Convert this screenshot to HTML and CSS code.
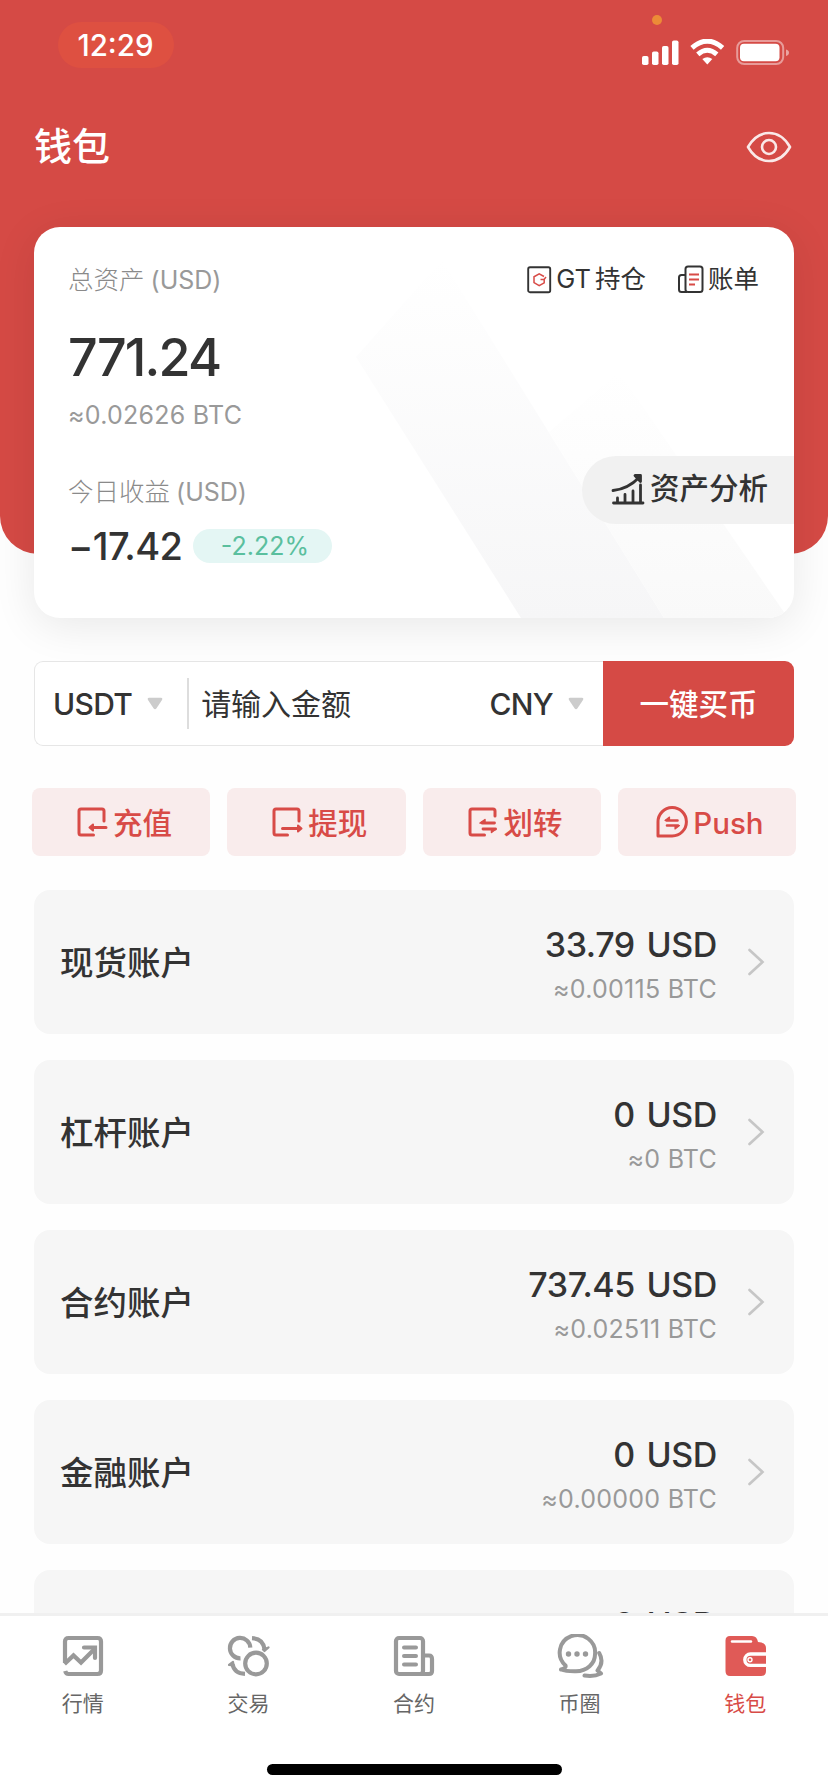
FILE: index.html
```html
<!DOCTYPE html>
<html lang="zh-CN">
<head>
<meta charset="utf-8">
<title>钱包</title>
<link rel="stylesheet" href="styles.css">
</head>
<body>
<div class="screen">
  <header class="header">
    <div class="status">
      <span class="time">12:29</span>
      <span class="mic-dot"></span>
      <svg class="status-icons" width="148" height="28" viewBox="0 0 148 28" fill="#fff">
        <rect x="0" y="17" width="6.500" height="9" rx="1.800"/>
        <rect x="10" y="12.500" width="6.500" height="13.500" rx="1.800"/>
        <rect x="20" y="7" width="6.500" height="19" rx="1.800"/>
        <rect x="30" y="1.500" width="6.500" height="24.500" rx="1.800"/>
        <g fill="none" stroke="#fff" stroke-width="5">
          <path d="M50 8.800Q65.300 -4.500 80.600 8.800"/>
          <path d="M55.800 15.300Q65.300 7.200 74.800 15.300"/>
        </g>
        <path d="M60.300 20Q65.300 16.300 70.300 20L65.300 25.500Z"/>
        <rect x="95.200" y="2" width="46" height="23" rx="7" fill="none" stroke="#fff" stroke-opacity=".45" stroke-width="2"/>
        <rect x="98" y="4.800" width="39.500" height="17.400" rx="4"/>
        <path d="M144 10.500q3 .8 3 3.200t-3 3.200z" fill-opacity=".5"/>
      </svg>
    </div>
    <div class="titlebar">
      <h1 class="title">钱包</h1>
      <svg width="46" height="32" viewBox="0 0 46 32" fill="none" stroke="#fff" stroke-opacity=".88" stroke-width="2.600" stroke-linejoin="round">
        <path d="M2 16Q10 2 23 2T44 16Q36 30 23 30T2 16Z"/>
        <circle cx="23" cy="16" r="7"/>
      </svg>
    </div>
  </header>

  <section class="card">
    <svg class="card-art" width="760" height="391" viewBox="0 0 760 391">
      <defs>
        <linearGradient id="band" x1="0" y1="0" x2="0" y2="1">
          <stop offset="0" stop-color="#f6f6f7" stop-opacity="0"/>
          <stop offset="1" stop-color="#f6f6f7"/>
        </linearGradient>
        <linearGradient id="band-light" x1="0" y1="0" x2="0" y2="1">
          <stop offset="0" stop-color="#f9f9f9" stop-opacity="0"/>
          <stop offset="1" stop-color="#f9f9f9"/>
        </linearGradient>
      </defs>
      <path d="M322 130L408 33L630 391H487Z" fill="url(#band)"/>
      <path d="M515 205L585 145L754 391H630Z" fill="url(#band-light)"/>
    </svg>
    <div class="card-left">
      <div class="label">总资产<span class="unit">(USD)</span></div>
      <div class="total">771.24</div>
      <div class="btc">≈0.02626 BTC</div>
      <div class="label label-today">今日收益<span class="unit">(USD)</span></div>
      <div class="profit"><span class="profit-value">−17.42</span><span class="rate">-2.22%</span></div>
    </div>
    <div class="card-right">
      <div class="links">
        <a class="link">
          <svg width="26" height="30" viewBox="0 0 26 30" fill="none" stroke="#333" stroke-width="1.900">
            <rect x="1.200" y="2.200" width="22" height="25" rx="1.800"/>
            <path d="M17 11.500L12.200 8.800L7 11.800V17.600L12.200 20.600L17.200 17.800V14.500H13.500M17 14.500L19 12" stroke="#d84b47" stroke-width="1.500"/>
          </svg>
          <span>GT<span class="hair"></span>持仓</span>
        </a>
        <a class="link">
          <svg width="28" height="30" viewBox="0 0 28 30" fill="none" stroke="#333" stroke-width="2" stroke-linejoin="round">
            <rect x="8.500" y="1.500" width="17" height="25.500" rx="2.500"/>
            <path d="M8.500 10H4.500Q2 10 2 12.500V24.500Q2 27 4.500 27H10"/>
            <path d="M12 9.500H22M12 14.500H22M12 19.500H18" stroke="#d84b47"/>
          </svg>
          <span>账单</span>
        </a>
      </div>
      <a class="analysis">
        <svg width="34" height="34" viewBox="0 0 34 34" fill="none" stroke="#333" stroke-width="2.800" stroke-linecap="round">
          <path d="M2.500 31H32M6.500 31V26M14 31V22.500M22 31V19M29.500 31V13"/>
          <path d="M2 18.500C12 17.500 21 13 28.500 5"/>
          <path d="M24 3.500H29.500V9.500Z" fill="#333" stroke-linejoin="round"/>
        </svg>
        <span>资产分析</span>
      </a>
    </div>
  </section>

  <section class="buy">
    <div class="buy-field">
      <span class="currency">USDT</span>
      <svg class="caret" width="16" height="13" viewBox="0 0 16 13"><path d="M2 .8H14Q16 1 15 3L9.500 11.300Q8 13 6.500 11.300L1 3Q0 1 2 .8Z" fill="#ccc"/></svg>
      <span class="divider"></span>
      <span class="placeholder">请输入金额</span>
      <span class="currency">CNY</span>
      <svg class="caret" width="16" height="13" viewBox="0 0 16 13"><path d="M2 .8H14Q16 1 15 3L9.500 11.300Q8 13 6.500 11.300L1 3Q0 1 2 .8Z" fill="#ccc"/></svg>
    </div>
    <button class="buy-button">一键买币</button>
  </section>

  <nav class="actions">
    <a class="action">
      <svg width="32" height="32" viewBox="0 0 32 32" fill="none" stroke="#d84b47" stroke-width="3" stroke-linecap="round" stroke-linejoin="round">
        <path d="M17.500 29H5Q3 29 3 27V5Q3 3 5 3H26Q28 3 28 5V15M17 21.500H30"/>
        <path d="M17 18.500L13.500 21.500L17 24.500Z" fill="#d84b47" stroke-width="2"/>
      </svg>
      <span>充值</span>
    </a>
    <a class="action">
      <svg width="32" height="32" viewBox="0 0 32 32" fill="none" stroke="#d84b47" stroke-width="3" stroke-linecap="round" stroke-linejoin="round">
        <path d="M16.500 29H5Q3 29 3 27V5Q3 3 5 3H26Q28 3 28 5V15M11.500 22.500H27"/>
        <path d="M27 19.500L30.500 22.500L27 25.500Z" fill="#d84b47" stroke-width="2"/>
      </svg>
      <span>提现</span>
    </a>
    <a class="action">
      <svg width="32" height="32" viewBox="0 0 32 32" fill="none" stroke="#d84b47" stroke-width="3" stroke-linecap="round" stroke-linejoin="round">
        <path d="M17.500 29H5Q3 29 3 27V5Q3 3 5 3H26Q28 3 28 5V10"/>
        <path d="M15 17H27.500M16 23H28.500" stroke-width="2.800"/>
        <path d="M18 13.500L13 17H18ZM24.500 26.500L29 23H24.500Z" fill="#d84b47" stroke-width="1.500"/>
      </svg>
      <span>划转</span>
    </a>
    <a class="action">
      <svg width="32" height="32" viewBox="0 0 32 32" fill="none" stroke="#d84b47" stroke-width="3" stroke-linecap="round" stroke-linejoin="round">
        <path d="M2 30V16A14.200 14.200 0 1 1 16.200 30Z"/>
        <path d="M10.500 14.500H21.500M11 19.500H22" stroke-width="2.600"/>
        <path d="M13.500 11L9 14.500H13.500ZM19 23L23.500 19.500H19Z" fill="#d84b47" stroke-width="1.200"/>
      </svg>
      <span class="push">Push</span>
    </a>
  </nav>

  <main class="accounts">
    <div class="account">
      <span class="account-name">现货账户</span>
      <div class="amounts"><span class="usd">33.79 USD</span><span class="btc">≈0.00115 BTC</span></div>
      <svg class="chevron" width="18" height="30" viewBox="0 0 18 30"><path d="M2.500 3L15.500 15L2.500 27"/></svg>
    </div>
    <div class="account">
      <span class="account-name">杠杆账户</span>
      <div class="amounts"><span class="usd">0 USD</span><span class="btc">≈0 BTC</span></div>
      <svg class="chevron" width="18" height="30" viewBox="0 0 18 30"><path d="M2.500 3L15.500 15L2.500 27"/></svg>
    </div>
    <div class="account">
      <span class="account-name">合约账户</span>
      <div class="amounts"><span class="usd">737.45 USD</span><span class="btc">≈0.02511 BTC</span></div>
      <svg class="chevron" width="18" height="30" viewBox="0 0 18 30"><path d="M2.500 3L15.500 15L2.500 27"/></svg>
    </div>
    <div class="account">
      <span class="account-name">金融账户</span>
      <div class="amounts"><span class="usd">0 USD</span><span class="btc">≈0.00000 BTC</span></div>
      <svg class="chevron" width="18" height="30" viewBox="0 0 18 30"><path d="M2.500 3L15.500 15L2.500 27"/></svg>
    </div>
    <div class="account">
      <div class="amounts"><span class="usd">0 USD</span><span class="btc"></span></div>
      <span class="chevron"></span>
    </div>
  </main>

  <footer class="tabbar">
    <div class="tabs">
      <a class="tab">
        <svg width="48" height="44" viewBox="0 0 48 44" fill="none" stroke="#999" stroke-width="4.200" stroke-linejoin="round">
          <path d="M6 29V7.500Q6 4 9.500 4H38.500Q42 4 42 7.500V36.500Q42 40 38.500 40H9.500Q7 40 6.200 37"/>
          <path d="M5.500 30L14.500 21.500L22 28.500L35 15.500" stroke-linejoin="miter"/>
          <path d="M25 13.500H36V24" stroke-linecap="round" stroke-linejoin="miter"/>
        </svg>
        <span>行情</span>
      </a>
      <a class="tab">
        <svg width="48" height="44" viewBox="0 0 48 44" fill="none" stroke="#999" stroke-width="4.200">
          <circle cx="32" cy="29.500" r="10.800"/>
          <path d="M26.300 13.500A10.200 10.200 0 1 0 16.500 24.300"/>
          <path d="M28 4.200C35 4.500 39.500 8.500 40.500 15M21 39.800C14 39.500 9.500 36 8.500 30"/>
          <path d="M39 15.500L44.500 13.500L40.500 17Z M5 31L9 28L9.500 31.500Z" fill="#999" stroke-width="2.200" stroke-linejoin="round"/>
        </svg>
        <span>交易</span>
      </a>
      <a class="tab">
        <svg width="48" height="44" viewBox="0 0 48 44" fill="none" stroke="#999" stroke-width="4.200" stroke-linejoin="round">
          <rect x="6" y="4" width="27" height="36" rx="3"/>
          <path d="M33 21.500H39Q42 21.500 42 25V37Q42 40 39 40H30"/>
          <path d="M14 13.500H26M14 22H26M14 30.500H26" stroke-linecap="round" stroke-width="4"/>
        </svg>
        <span>合约</span>
      </a>
      <a class="tab">
        <svg width="48" height="44" viewBox="0 0 48 44" fill="none" stroke="#999" stroke-width="4" stroke-linecap="round" stroke-linejoin="round">
          <path d="M5 35.500Q10 37.500 20 37.300C31 37 39 29.500 39 20.500A17.700 17.500 0 1 0 9.500 31.500Q10.500 34 5 35.500"/>
          <path d="M43.200 19Q48.500 28 41.500 36.500L45 39.500Q38 43 28.500 41.500"/>
          <g fill="#999" stroke="none"><circle cx="12.500" cy="20" r="2.700"/><circle cx="21" cy="20" r="2.700"/><circle cx="29.500" cy="20" r="2.700"/></g>
        </svg>
        <span>币圈</span>
      </a>
      <a class="tab tab-active">
        <svg width="48" height="44" viewBox="0 0 48 44">
          <path d="M9 2H31Q36 2 37 8Q45 8.500 45 14V37Q45 42 40 42H9Q4.500 42 4.500 37V6.500Q4.500 2 9 2Z" fill="#e05a57"/>
          <path d="M11 7.500H30" stroke="#fff" stroke-width="2.400" stroke-linecap="round"/>
          <path d="M45 20H29.500A5.700 5.700 0 0 0 29.500 31.400H45" fill="#e05a57" stroke="#fff" stroke-width="3.400"/>
          <circle cx="29" cy="25.700" r="2" fill="none" stroke="#fff" stroke-width="1.400"/>
        </svg>
        <span>钱包</span>
      </a>
    </div>
    <div class="home-indicator"></div>
  </footer>
</div>
</body>
</html>
```
FILE: styles.css
```css
* { box-sizing: border-box; }
body {
  margin: 0;
  font-family: Inter, "Noto Sans CJK SC", sans-serif;
  color: #333;
  background: #fff;
}
.screen {
  position: relative;
  width: 828px;
  height: 1792px;
  overflow: hidden;
  background: #fefefe;
}
.header {
  height: 554px;
  background: #d54a45;
  border-radius: 0 0 38px 38px;
}
.status {
  position: relative;
  display: flex;
  justify-content: space-between;
  padding: 22px 38px 0 58px;
  height: 106px;
}
.time {
  width: 116px;
  height: 46px;
  padding-right: 1px;
  border-radius: 23px;
  background: #de5041;
  color: #fff;
  font-size: 29.5px;
  font-weight: 500;
  line-height: 47px;
  text-align: center;
}
.mic-dot {
  position: absolute;
  left: 652px;
  top: 15px;
  width: 10px;
  height: 10px;
  border-radius: 50%;
  background: #ec8b37;
}
.status-icons { margin-top: 17px; }
.titlebar {
  display: flex;
  justify-content: space-between;
  align-items: center;
  height: 82px;
  padding: 0 36px 0 34px;
}
.title {
  margin: 0;
  padding-bottom: 2px;
  color: #fff;
  font-size: 38px;
  font-weight: 500;
  line-height: 50px;
}
.card {
  position: relative;
  display: flex;
  justify-content: space-between;
  width: 760px;
  height: 391px;
  margin: -327px auto 0;
  border-radius: 26px;
  background: #fff;
  box-shadow: 0 8px 44px rgba(0, 0, 0, .09);
}
.card-art {
  position: absolute;
  left: 0;
  top: 0;
  border-radius: 26px;
}
.card-left, .card-right { position: relative; }
.card-left { padding: 33px 0 0 34px; }
.label {
  font-size: 25.5px;
  font-weight: 300;
  line-height: 40px;
  color: #8a8a8a;
}
.unit {
  margin-left: 6px;
  font-size: 25px;
  font-weight: 400;
  color: #999;
}
.total {
  margin-top: 28px;
  font-size: 52px;
  font-weight: 500;
  letter-spacing: -1.8px;
  line-height: 60px;
}
.card-left .btc { margin-top: 12px; }
.btc {
  font-size: 25px;
  letter-spacing: .25px;
  line-height: 30px;
  color: #999;
}
.label-today { margin-top: 42px; }
.profit {
  display: flex;
  align-items: center;
  gap: 11px;
  height: 36px;
  margin-top: 16px;
}
.profit-value {
  font-size: 38px;
  font-weight: 500;
  letter-spacing: -.6px;
}
.rate {
  width: 139px;
  height: 34px;
  padding-left: 4px;
  border-radius: 17px;
  background: #e4f6f4;
  color: #5abf9e;
  font-size: 25px;
  line-height: 35px;
  text-align: center;
}
.card-right {
  display: flex;
  flex-direction: column;
  align-items: flex-end;
}
.links {
  display: flex;
  gap: 31px;
  padding: 34px 35px 0 0;
}
.link {
  display: flex;
  align-items: center;
  gap: 3px;
  height: 36px;
  font-size: 25.5px;
}
.link > span { padding-bottom: 5px; }
.link svg { margin-top: 1px; }
.hair {
  display: inline-block;
  width: 4px;
}
.analysis {
  display: flex;
  align-items: center;
  gap: 5px;
  width: 212px;
  height: 68px;
  margin-top: 159px;
  padding: 0 0 6px 29px;
  border-radius: 34px 0 0 34px;
  background: #f1f1f1;
  font-size: 29.5px;
  font-weight: 500;
}
.analysis span { padding-bottom: 3px; }
.analysis svg { margin-top: 4px; }
.buy {
  display: flex;
  width: 760px;
  height: 85px;
  margin: 43px auto 0;
}
.buy-field {
  display: flex;
  align-items: center;
  flex: 1;
  padding: 0 19px 0 18px;
  border: 1.5px solid #e6e6e6;
  border-right: 0;
  border-radius: 9px 0 0 9px;
  background: #fff;
  font-size: 30px;
}
.currency {
  font-weight: 500;
  letter-spacing: -.7px;
}
.caret { margin-left: 15px; }
.divider {
  width: 2px;
  height: 51px;
  margin: 0 12px 0 24px;
  background: #ddd;
}
.placeholder {
  flex: 1;
  padding-bottom: 4px;
}
.buy-button {
  width: 191px;
  padding: 0 0 3px;
  border: 0;
  border-radius: 0 9px 9px 0;
  background: #d54a45;
  color: #fff;
  font: inherit;
  font-size: 29.5px;
  font-weight: 500;
}
.actions {
  display: grid;
  grid-template-columns: repeat(4, 1fr);
  gap: 17px;
  margin: 42px 32px 0;
}
.action {
  display: flex;
  align-items: center;
  justify-content: center;
  gap: 5px;
  height: 68px;
  padding-left: 6px;
  border-radius: 8px;
  background: #f9ecec;
  color: #d84b47;
  font-size: 29.5px;
  font-weight: 500;
}
.action span { padding-bottom: 2px; }
.action .push { padding: 2px 0 0; }
.accounts {
  display: flex;
  flex-direction: column;
  gap: 26px;
  margin: 34px 34px 0;
}
.account {
  display: flex;
  align-items: center;
  height: 144px;
  padding: 0 29px 0 26px;
  border-radius: 16px;
  background: #f6f6f6;
}
.account-name {
  padding-bottom: 4px;
  font-size: 33.5px;
  font-weight: 500;
}
.amounts {
  display: flex;
  flex-direction: column;
  align-items: flex-end;
  flex: 1;
}
.usd {
  font-size: 34px;
  font-weight: 500;
  letter-spacing: -.4px;
  word-spacing: 3px;
  line-height: 50px;
  margin-bottom: 4px;
}
.amounts .btc { height: 30px; }
.chevron {
  width: 18px;
  margin-left: 30px;
  fill: none;
  stroke: #c6c6c6;
  stroke-width: 2.6px;
  stroke-linecap: round;
}
.tabbar {
  position: absolute;
  left: 0;
  bottom: 0;
  width: 828px;
  height: 179px;
  border-top: 3px solid #f0f0f0;
  background: #fff;
}
.tabs {
  display: grid;
  grid-template-columns: repeat(5, 1fr);
  padding-top: 18px;
}
.tab {
  display: flex;
  flex-direction: column;
  align-items: center;
  gap: 10px;
  height: 130px;
  color: #666;
  font-size: 21px;
  line-height: 32px;
}
.tab-active { color: #d84b47; }
.home-indicator {
  width: 295px;
  height: 11px;
  margin: 0 auto;
  border-radius: 6px;
  background: #000;
}
```
